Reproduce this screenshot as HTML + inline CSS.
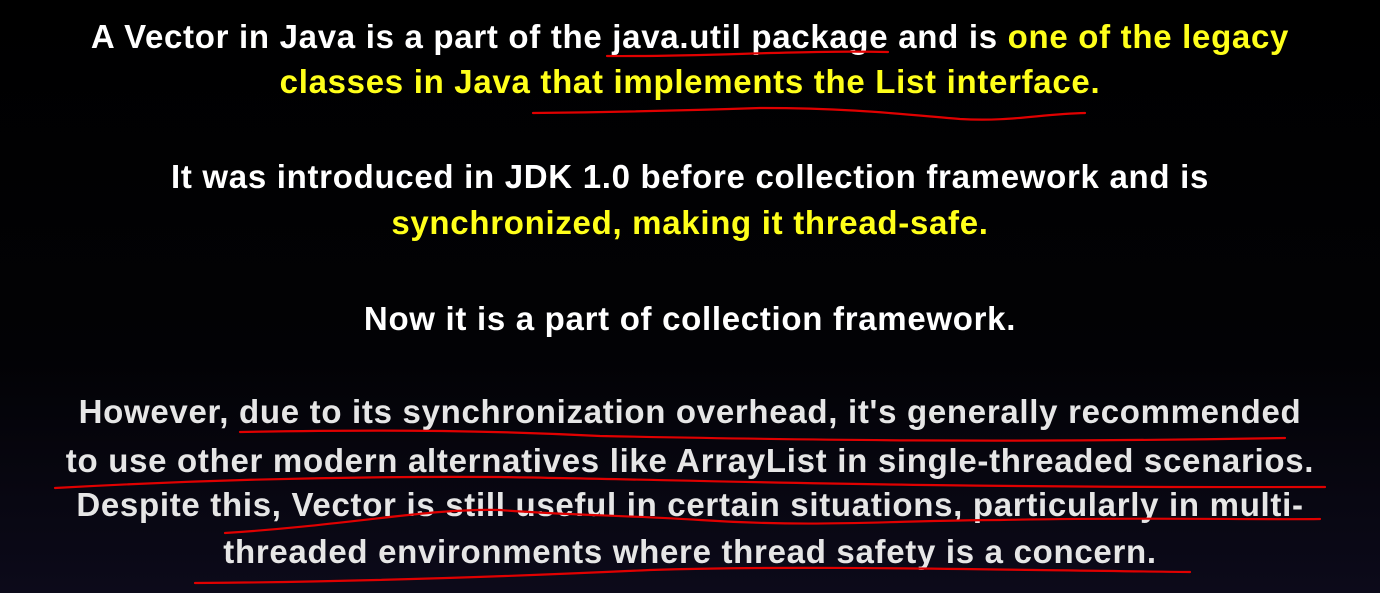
<!DOCTYPE html>
<html><head><meta charset="utf-8"><style>
html,body{margin:0;padding:0}
body{width:1380px;height:593px;overflow:hidden;background:linear-gradient(180deg,#000 0%,#020205 60%,#0c0a1a 100%);position:relative;font-family:"Liberation Sans",sans-serif;font-weight:bold;}
.l{position:absolute;left:0;width:1380px;text-align:center;font-size:33px;letter-spacing:0.7px;color:#fff;white-space:nowrap;line-height:40px}
.y{color:#ffff1a}
.g{color:#e6e6e6}
svg{position:absolute;left:0;top:0}
</style></head><body>
<div class="l" style="top:17px">A Vector in Java is a part of the java.util package and is <span class="y">one of the legacy</span></div>
<div class="l y" style="top:62px">classes in Java that implements the List interface.</div>
<div class="l" style="top:157px">It was introduced in JDK 1.0 before collection framework and is</div>
<div class="l y" style="top:203px">synchronized, making it thread-safe.</div>
<div class="l" style="top:299px">Now it is a part of collection framework.</div>
<div class="l g" style="top:392px">However, due to its synchronization overhead, it's generally recommended</div>
<div class="l g" style="top:441px">to use other modern alternatives like ArrayList in single-threaded scenarios.</div>
<div class="l g" style="top:485px">Despite this, Vector is still useful in certain situations, particularly in multi-</div>
<div class="l g" style="top:532px">threaded environments where thread safety is a concern.</div>
<svg width="1380" height="593" fill="none" stroke="#e00000" stroke-width="2.2" stroke-linecap="round">
<path d="M607 56 C700 57 800 50 888 52"/>
<path d="M533 113 C620 112 700 110 760 108 C850 108 900 114 960 119 C1010 122 1040 114 1085 113"/>
<path d="M240 432 C400 429 500 431 600 436 C800 440 1000 443 1285 438"/>
<path d="M55 488 C200 480 350 476 500 477 C700 480 900 488 1325 487"/>
<path d="M225 533 C350 525 430 508 500 510 C560 515 620 515 700 520 C820 528 900 520 1000 520 C1150 517 1250 520 1320 519"/>
<path d="M195 583 C350 582 500 577 650 570 C800 565 1000 570 1190 572"/>
</svg>
</body></html>
